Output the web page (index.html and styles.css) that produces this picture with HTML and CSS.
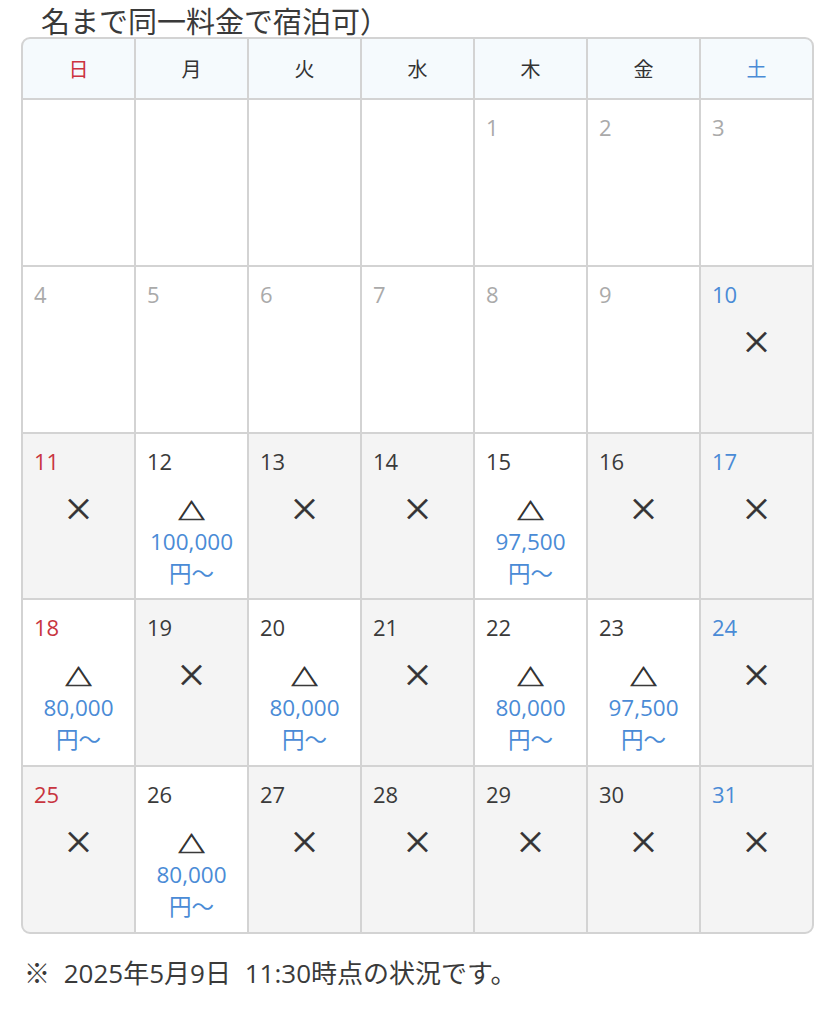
FILE: index.html
```html
<!DOCTYPE html>
<html lang="ja">
<head>
<meta charset="utf-8">
<link rel="stylesheet" href="styles.css">
</head>
<body>
<div class="page">
  <p class="note-top">名まで同一料金で宿泊可）</p>
  <div class="cal">
    <div class="hd sun">日</div>
    <div class="hd">月</div>
    <div class="hd">火</div>
    <div class="hd">水</div>
    <div class="hd">木</div>
    <div class="hd">金</div>
    <div class="hd sat">土</div>

    <div class="cell"></div>
    <div class="cell"></div>
    <div class="cell"></div>
    <div class="cell"></div>
    <div class="cell past"><span class="d">1</span></div>
    <div class="cell past"><span class="d">2</span></div>
    <div class="cell past"><span class="d">3</span></div>

    <div class="cell past"><span class="d">4</span></div>
    <div class="cell past"><span class="d">5</span></div>
    <div class="cell past"><span class="d">6</span></div>
    <div class="cell past"><span class="d">7</span></div>
    <div class="cell past"><span class="d">8</span></div>
    <div class="cell past"><span class="d">9</span></div>
    <div class="cell ng sat"><span class="d">10</span><span class="mk x">×</span></div>

    <div class="cell ng sun"><span class="d">11</span><span class="mk x">×</span></div>
    <div class="cell ok"><span class="d">12</span><span class="mk t">△</span><span class="pr">100,000<br>円〜</span></div>
    <div class="cell ng"><span class="d">13</span><span class="mk x">×</span></div>
    <div class="cell ng"><span class="d">14</span><span class="mk x">×</span></div>
    <div class="cell ok"><span class="d">15</span><span class="mk t">△</span><span class="pr">97,500<br>円〜</span></div>
    <div class="cell ng"><span class="d">16</span><span class="mk x">×</span></div>
    <div class="cell ng sat"><span class="d">17</span><span class="mk x">×</span></div>

    <div class="cell ok sun"><span class="d">18</span><span class="mk t">△</span><span class="pr">80,000<br>円〜</span></div>
    <div class="cell ng"><span class="d">19</span><span class="mk x">×</span></div>
    <div class="cell ok"><span class="d">20</span><span class="mk t">△</span><span class="pr">80,000<br>円〜</span></div>
    <div class="cell ng"><span class="d">21</span><span class="mk x">×</span></div>
    <div class="cell ok"><span class="d">22</span><span class="mk t">△</span><span class="pr">80,000<br>円〜</span></div>
    <div class="cell ok"><span class="d">23</span><span class="mk t">△</span><span class="pr">97,500<br>円〜</span></div>
    <div class="cell ng sat"><span class="d">24</span><span class="mk x">×</span></div>

    <div class="cell ng sun"><span class="d">25</span><span class="mk x">×</span></div>
    <div class="cell ok"><span class="d">26</span><span class="mk t">△</span><span class="pr">80,000<br>円〜</span></div>
    <div class="cell ng"><span class="d">27</span><span class="mk x">×</span></div>
    <div class="cell ng"><span class="d">28</span><span class="mk x">×</span></div>
    <div class="cell ng"><span class="d">29</span><span class="mk x">×</span></div>
    <div class="cell ng"><span class="d">30</span><span class="mk x">×</span></div>
    <div class="cell ng sat"><span class="d">31</span><span class="mk x">×</span></div>
  </div>
  <p class="note-bottom">※ 2025年5月9日 11:30時点の状況です。</p>
</div>
</body>
</html>
```

FILE: styles.css
```css
* { box-sizing: border-box; }
html, body { margin: 0; padding: 0; background: #fff; }
body {
  font-family: "Open Sans", "Noto Sans CJK JP", sans-serif;
  color: #333;
}
.page {
  padding: 0 22px 0 21px;
}
.note-top {
  margin: 0;
  padding-left: 20px;
  height: 37px;
  font-family: "Noto Sans CJK JP", sans-serif;
  font-size: 29px;
  line-height: 41px;
  color: #3a3a3a;
}
.cal {
  display: grid;
  grid-template-columns: repeat(7, 1fr);
  grid-template-rows: 59px repeat(5, 164.8px);
  gap: 2px;
  background: #d3d3d3;
  border: 2px solid #d3d3d3;
  border-radius: 9px;
  overflow: hidden;
}
.hd {
  background: #f5fafd;
  display: flex;
  align-items: center;
  justify-content: center;
  font-family: "Noto Sans CJK JP", sans-serif;
  font-size: 20px;
  color: #333;
}
.hd.sun { color: #cc3340; }
.hd.sat { color: #4a8bd6; }
.cell {
  background: #fff;
  display: flex;
  flex-direction: column;
  align-items: center;
  padding-top: 12px;
}
.cell.ng { background: #f4f4f4; }
.d {
  align-self: flex-start;
  padding-left: 11px;
  font-size: 22px;
  line-height: 30px;
  color: #3a3a3a;
}
.past .d { color: #aaa; }
.sun .d { color: #c8353f; }
.sat .d { color: #4a8bd6; }
.mk {
  font-family: "Noto Sans CJK JP", sans-serif;
  line-height: 34px;
  margin-top: 14px;
  color: #333;
}
.mk.x {
  font-size: 31px;
  -webkit-text-stroke: 0.5px #333;
}
.mk.t {
  display: inline-block;
  font-size: 27px;
  transform: translateY(3px) scaleY(0.78);
  -webkit-text-stroke: 0.9px #333;
}
.pr {
  text-align: center;
  font-size: 22.5px;
  line-height: 32px;
  color: #4a8bd6;
  margin-top: 2px;
}
.note-bottom {
  margin: 22px 0 0 3px;
  font-size: 26px;
  line-height: 34px;
  word-spacing: 7px;
  color: #3a3a3a;
}
```
